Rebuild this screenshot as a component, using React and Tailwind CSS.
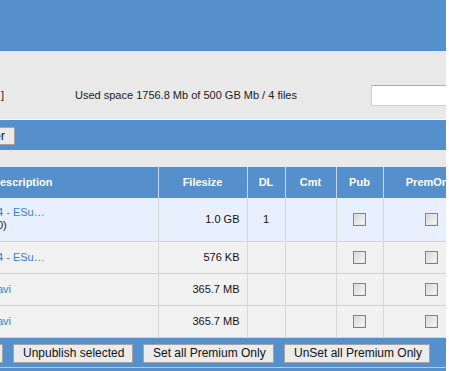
import React from "react";

const files = [
  { name: "4 - ESu…", extra: "0)", size: "1.0 GB", dl: "1", tall: true, bg: "bg-[#e8f0fd]" },
  { name: "4 - ESu…", size: "576 KB", dl: "", bg: "bg-[#f1f1f1]" },
  { name: "avi", size: "365.7 MB", dl: "", bg: "bg-[#f1f1f1]" },
  { name: "avi", size: "365.7 MB", dl: "", bg: "bg-[#f1f1f1]" },
];

const Check = () => (
  <div className="mx-auto w-[13px] h-[13px] border border-[#828282] bg-gradient-to-br from-[#d4d4d4] to-[#fbfbfb] shadow-[inset_0_0_0_1px_#e6e6e6]"></div>
);

const Btn = ({ children, className = "" }) => (
  <button className={"h-[19px] px-[9px] bg-[#ebebeb] border border-[#a3a3a3] text-[12px] leading-[17px] text-[#111] whitespace-nowrap " + className}>
    {children}
  </button>
);

export default function App() {
  return (
    <div className="w-[449px] h-[371px] bg-white flex font-['Liberation_Sans',Arial,sans-serif] text-[11px] text-[#222]">
      <div className="w-[446px] h-full overflow-hidden">
        <div className="-ml-[100px] w-[546px]">
          <div className="h-[51px] bg-[#558fcc]"></div>

          <div className="h-[69px] bg-[#e9e9e9] border-b border-[#f6f6f6] flex items-center pt-[20px]">
            <div className="w-[175px] shrink-0 pl-[101px]">]</div>
            <div className="w-[296px] shrink-0">Used space 1756.8 Mb of 500 GB Mb / 4 files</div>
            <div className="w-[80px] shrink-0 h-[21px] bg-white border border-[#d0d0d0] border-t-[#a9a9a9]"></div>
          </div>

          <div className="h-[30px] bg-[#558fcc] pt-[7px] flex">
            <button className="ml-[55px] h-[18px] w-[60px] bg-[#ebebeb] border border-[#a3a3a3] text-[12px] leading-[16px] text-right pr-[9px] text-[#111]">
              Filter
            </button>
          </div>

          <div className="h-[17px] bg-[#e9e9e9]"></div>

          <table className="table-fixed border-collapse w-[580px]">
            <colgroup>
              <col className="w-[258px]" />
              <col className="w-[89px]" />
              <col className="w-[38px]" />
              <col className="w-[51px]" />
              <col className="w-[47px]" />
              <col className="w-[97px]" />
            </colgroup>
            <thead>
              <tr className="h-[31px] bg-[#558fcc] text-white font-bold">
                <th className="text-left pl-[92px] font-bold">Description</th>
                <th className="border-l border-[#c6d7ee] font-bold">Filesize</th>
                <th className="border-l border-[#c6d7ee] font-bold">DL</th>
                <th className="border-l border-[#c6d7ee] font-bold">Cmt</th>
                <th className="border-l border-[#c6d7ee] font-bold">Pub</th>
                <th className="border-l border-[#c6d7ee] font-bold whitespace-nowrap">PremOnly</th>
              </tr>
            </thead>
            <tbody>
              {files.map((f, i) => (
                <tr key={i} className={(f.tall ? "h-[43px] " : "h-[32px] ") + f.bg + " border-b border-[#d3d3d3]"}>
                  <td className="pl-[97px] leading-[13px]">
                    <div className="text-[#3b7dd0] whitespace-nowrap">{f.name}</div>
                    {f.extra && <div>{f.extra}</div>}
                  </td>
                  <td className="border-l border-[#d6d6d6] text-right pr-[7px] text-[#111]">{f.size}</td>
                  <td className="border-l border-[#d6d6d6] text-center text-[#111]">{f.dl}</td>
                  <td className="border-l border-[#d6d6d6]"></td>
                  <td className="border-l border-[#d6d6d6]"><Check /></td>
                  <td className="border-l border-[#d6d6d6]"><Check /></td>
                </tr>
              ))}
            </tbody>
          </table>

          <div className="h-[29px] bg-[#558fcc] flex items-start pt-[6px] gap-[10px]">
            <Btn className="ml-[40px] w-[63px]">Publish</Btn>
            <Btn className="w-[120px]">Unpublish selected</Btn>
            <Btn className="w-[131px]">Set all Premium Only</Btn>
            <Btn className="w-[146px]">UnSet all Premium Only</Btn>
          </div>
          <div className="h-px bg-[#b4cdec]"></div>
          <div className="h-[10px] bg-[#558fcc]"></div>
        </div>
      </div>
    </div>
  );
}
